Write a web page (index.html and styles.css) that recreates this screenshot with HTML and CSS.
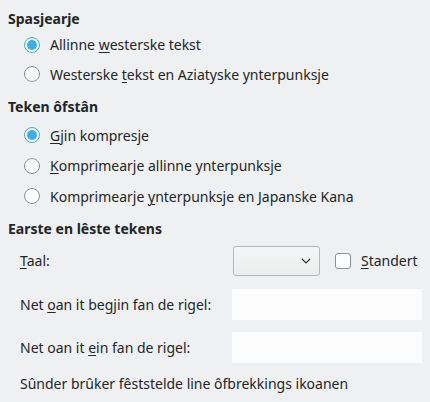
FILE: index.html
```html
<!DOCTYPE html>
<html>
<head>
<meta charset="utf-8">
<link rel="stylesheet" href="styles.css">
</head>
<body>
<div class="page">
  <div class="group g1">
    <div class="title">Spasjearje</div>
    <div class="opts">
      <div class="opt"><span class="radio on"></span><span>Allinne <u>w</u>esterske tekst</span></div>
      <div class="opt"><span class="radio"></span><span>Westerske <u>t</u>ekst en Aziatyske ynterpunksje</span></div>
    </div>
  </div>
  <div class="group g2">
    <div class="title">Teken ôfstân</div>
    <div class="opts">
      <div class="opt"><span class="radio on"></span><span><u>G</u>jin kompresje</span></div>
      <div class="opt"><span class="radio"></span><span><u>K</u>omprimearje allinne ynterpunksje</span></div>
      <div class="opt"><span class="radio"></span><span>Komprimearje <u>y</u>nterpunksje en Japanske Kana</span></div>
    </div>
  </div>
  <div class="group g3">
    <div class="title">Earste en lêste tekens</div>
    <div class="grid">
      <div class="lab"><u>T</u>aal:</div>
      <div class="langrow">
        <div class="combo"><svg width="10" height="6" viewBox="0 0 10 6"><path d="M1 1 L5 5 L9 1" fill="none" stroke="#31363b" stroke-width="1.2"/></svg></div>
        <span class="check"></span><span><u>S</u>tandert</span>
      </div>
      <div class="lab">Net <u>o</u>an it begjin fan de rigel:</div>
      <div class="field"></div>
      <div class="lab">Net oan it <u>e</u>in fan de rigel:</div>
      <div class="field"></div>
    </div>
    <div class="note">Sûnder brûker fêststelde line ôfbrekkings ikoanen</div>
  </div>
</div>
</body>
</html>
```
FILE: styles.css
```css
html, body { margin: 0; padding: 0; }
body {
  background: #eff0f1;
  color: #232629;
  font-family: "Noto Sans", "Open Sans", sans-serif;
  font-size: 14px;
  width: 430px;
  height: 402px;
  overflow: hidden;
}
u { text-decoration-thickness: 1px; text-underline-offset: 2px; }
.page { padding: 9px 8px 0 8px; display: flex; flex-direction: column; }
.title { font-weight: bold; height: 20px; line-height: 20px; }
.group { display: flex; flex-direction: column; }
.opts { display: flex; flex-direction: column; }
.g1 .opts { margin-top: 1px; gap: 0; }
.g1 .opt { height: 29.5px; }
.g2 { margin-top: 8px; }
.g2 .opts { margin-top: 3px; }
.g2 .opt { height: 30.5px; }
.g3 { margin-top: 7px; }
.opt { display: flex; align-items: center; padding-left: 16px; gap: 10px; }
.radio {
  width: 14px; height: 14px; border-radius: 50%;
  border: 1px solid #8d9093; background: #fcfcfc;
  box-sizing: content-box; flex: none; position: relative;
}
.radio.on { border-color: #3daee9; background: #fcfcfc; }
.radio.on::after {
  content: ""; position: absolute; left: 2px; top: 2px;
  width: 10px; height: 10px; border-radius: 50%; background: #3daee9;
}
.grid {
  display: grid; grid-template-columns: 212px 190px;
  padding-left: 12px; margin-top: 7px; align-items: center;
}
.grid > :nth-child(3), .grid > :nth-child(4) { margin-top: 13px; }
.grid > :nth-child(5), .grid > :nth-child(6) { margin-top: 12px; }
.langrow { display: flex; align-items: center; }
.combo {
  width: 77px; height: 28px; border: 1px solid #b4b6b8; border-radius: 3px;
  background: linear-gradient(#f4f5f5, #eceded);
  display: flex; align-items: center; justify-content: flex-end; padding-right: 8px;
  box-sizing: content-box; margin-left: 1px;
}
.check {
  width: 14px; height: 14px; border: 1px solid #8d9093; border-radius: 3px;
  background: #fcfcfc; margin-left: 15px; margin-right: 10px; flex: none;
}
.field { height: 31px; background: #fcfcfc; }
.note { padding-left: 12px; margin-top: 11px; line-height: 20px; }
```
